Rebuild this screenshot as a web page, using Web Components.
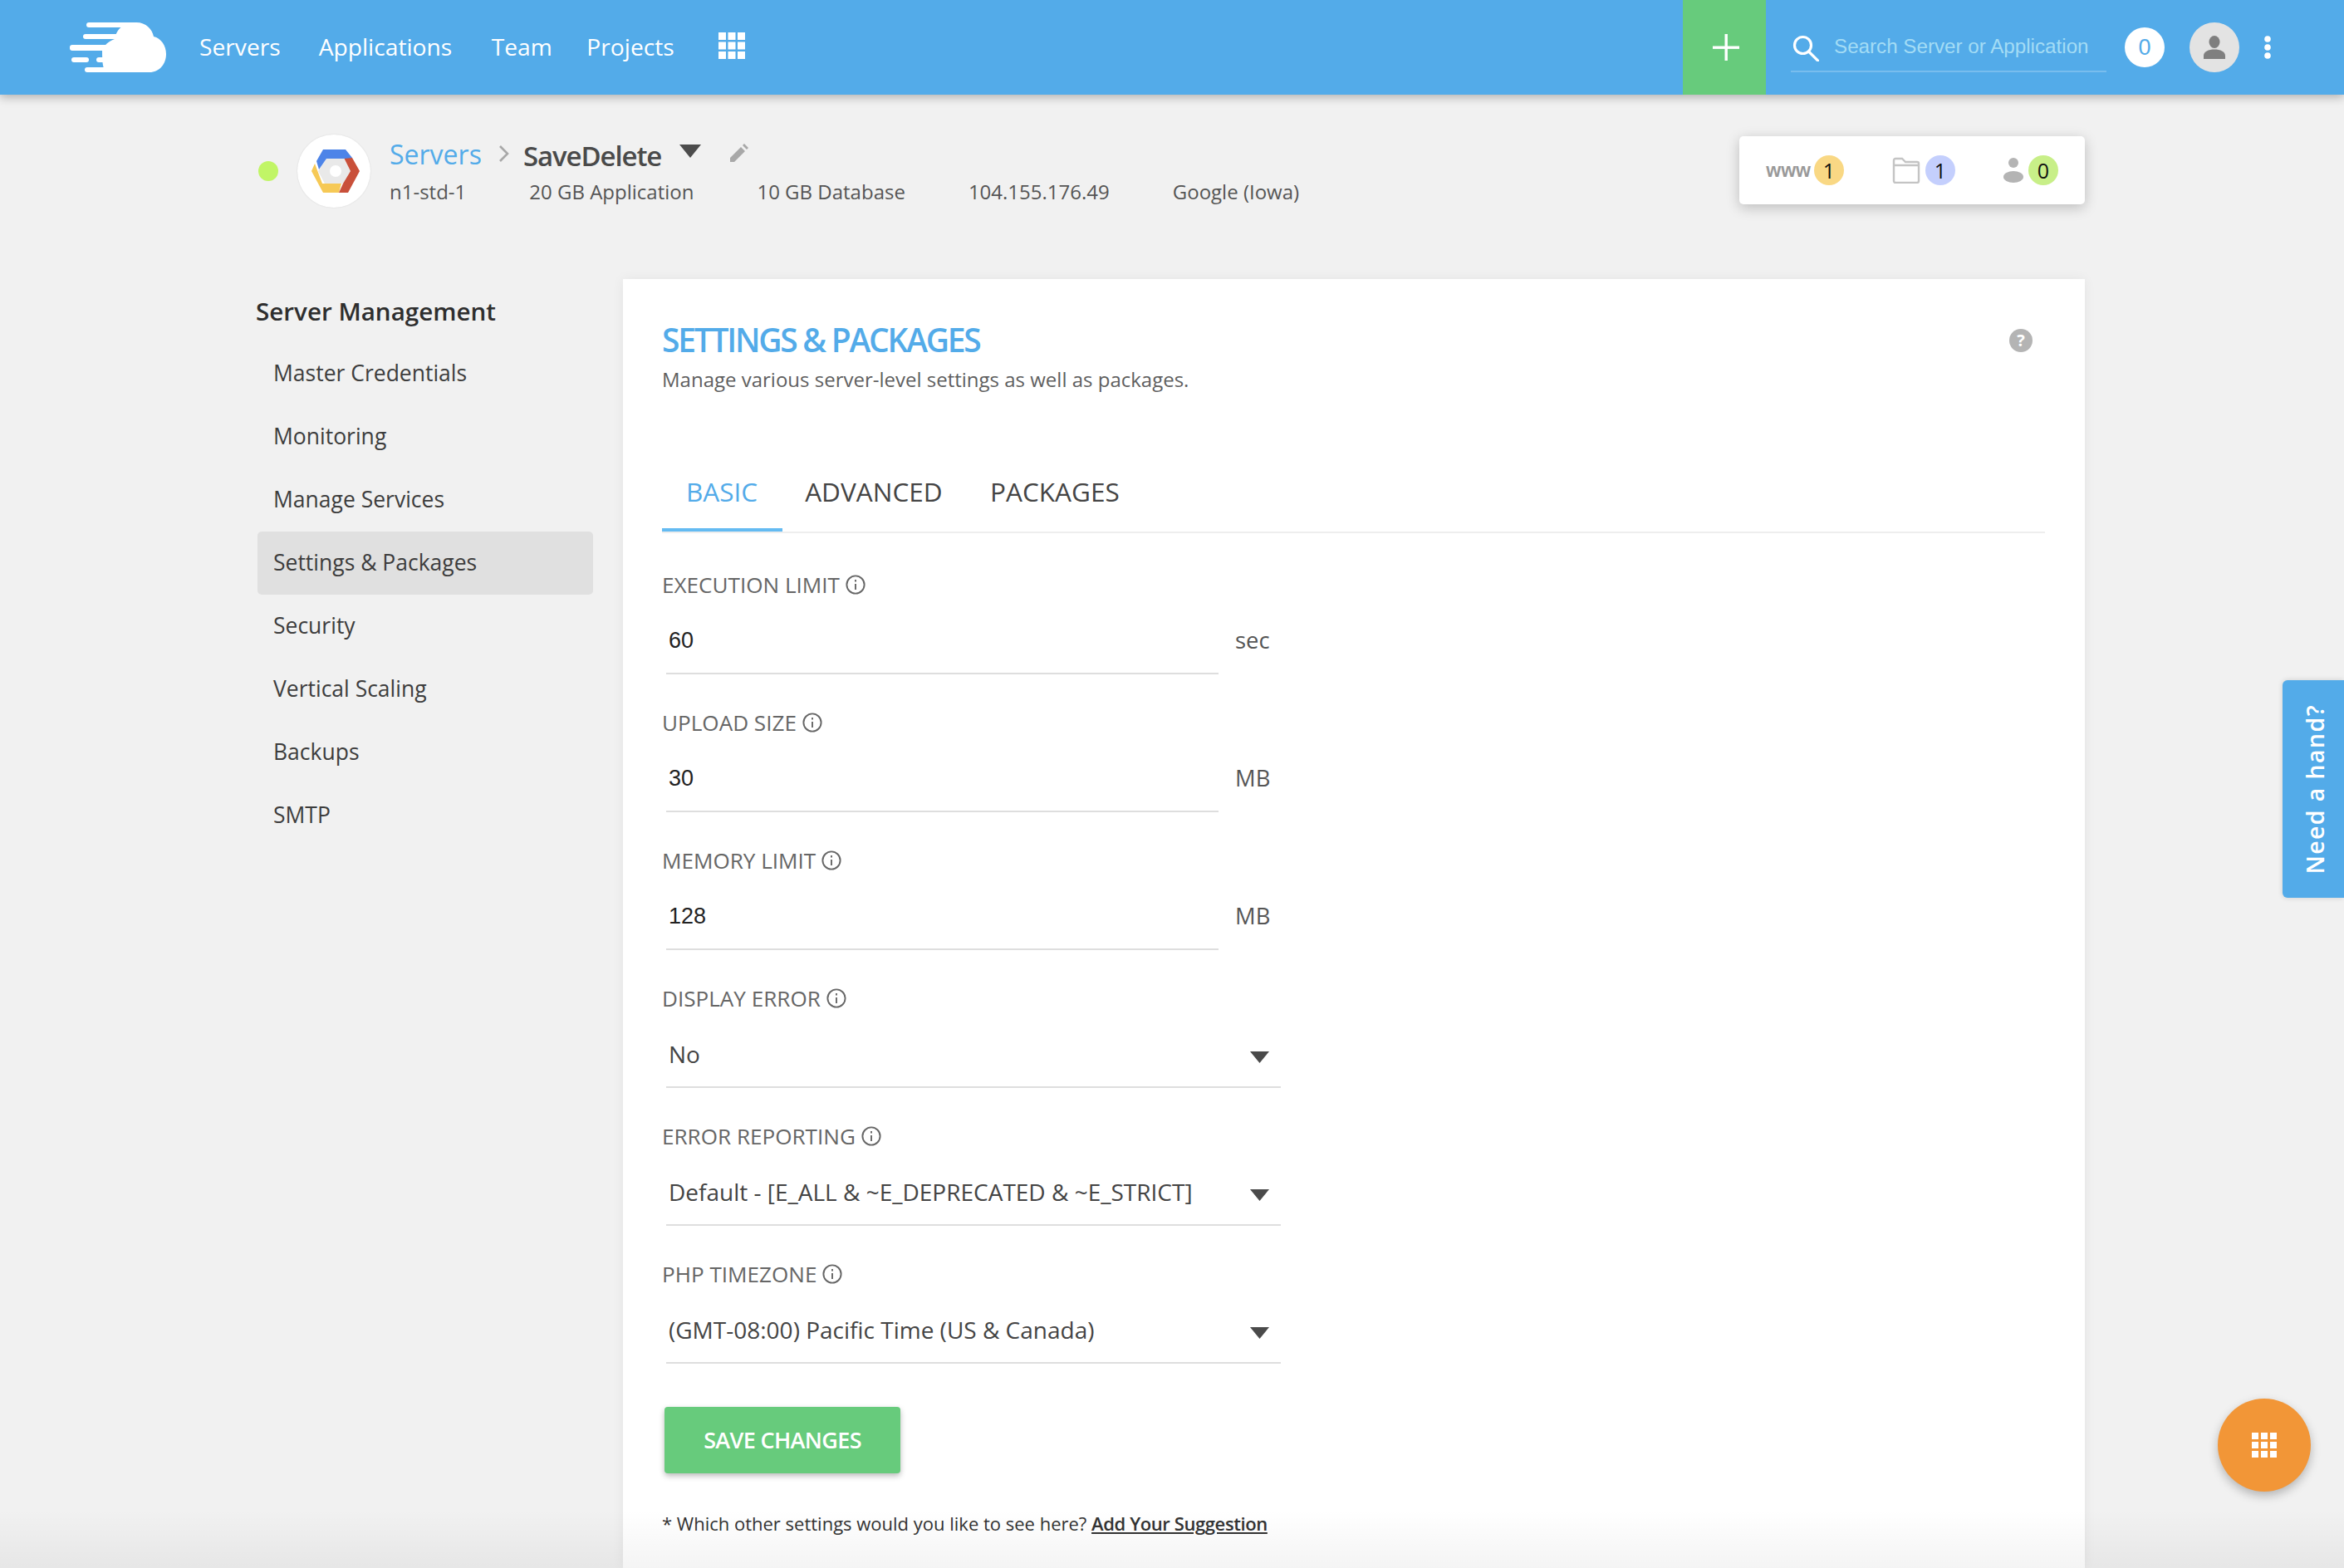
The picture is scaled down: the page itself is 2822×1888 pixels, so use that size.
<!DOCTYPE html>
<html lang="en">
<head>
<meta charset="utf-8">
<title>Settings &amp; Packages</title>
<style>
  html, body { margin: 0; padding: 0; }
  body {
    width: 2822px; height: 1888px; overflow: hidden; position: relative;
    background: #f1f1f1; color: #444;
    font-family: "Open Sans", "Liberation Sans", sans-serif;
  }
  .page { display: flex; margin-left: 310px; width: 2200px; }
</style>
</head>
<body>
<app-header></app-header>
<server-bar></server-bar>
<div class="page">
  <side-nav title="Server Management">
    <nav-item>Master Credentials</nav-item>
    <nav-item>Monitoring</nav-item>
    <nav-item>Manage Services</nav-item>
    <nav-item active>Settings &amp; Packages</nav-item>
    <nav-item>Security</nav-item>
    <nav-item>Vertical Scaling</nav-item>
    <nav-item>Backups</nav-item>
    <nav-item>SMTP</nav-item>
  </side-nav>
  <settings-card>
    <form-field label="EXECUTION LIMIT" value="60" unit="sec"></form-field>
    <form-field label="UPLOAD SIZE" value="30" unit="MB"></form-field>
    <form-field label="MEMORY LIMIT" value="128" unit="MB"></form-field>
    <form-field label="DISPLAY ERROR" value="No" select></form-field>
    <form-field label="ERROR REPORTING" value="Default - [E_ALL &amp; ~E_DEPRECATED &amp; ~E_STRICT]" select></form-field>
    <form-field label="PHP TIMEZONE" value="(GMT-08:00) Pacific Time (US &amp; Canada)" select></form-field>
  </settings-card>
</div>
<help-tab></help-tab>
<apps-fab></apps-fab>
<page-fade></page-fade>

<script>
  // 3x3 square grid, used in the header and on the round button
  function gridIcon(cell, gap, color) {
    let rects = '';
    const step = cell + gap;
    for (let r = 0; r < 3; r++) {
      for (let c = 0; c < 3; c++) {
        rects += `<rect x="${c * step}" y="${r * step}" width="${cell}" height="${cell}"/>`;
      }
    }
    const size = cell * 3 + gap * 2;
    return `<svg width="${size}" height="${size}" viewBox="0 0 ${size} ${size}" fill="${color}">${rects}</svg>`;
  }

  class AppHeader extends HTMLElement {
    constructor() {
      super();
      this.attachShadow({ mode: 'open' });
      this.shadowRoot.innerHTML = `
        <style>
          :host {
            display: flex; align-items: center; height: 114px; position: relative; z-index: 2;
            box-sizing: border-box; padding-right: 88px;
            background: #53abe9; color: #fff;
            box-shadow: 0 3px 11px rgba(0, 0, 0, .28);
          }
          .logo { margin-left: 84px; display: block; flex: none; }
          nav { display: flex; margin: -2px 0 0 40px; font-size: 28.2px; line-height: 40px; }
          nav a { margin-right: 47.5px; }
          nav a:nth-child(1) { margin-right: 46px; }
          nav a:nth-child(3) { margin-right: 41.5px; }
          .grid { margin-left: 6px; display: block; }
          .add {
            margin-left: auto; width: 100px; height: 114px; background: #67cb7c; flex: none;
            box-sizing: border-box; padding-left: 3px;
            display: flex; align-items: center; justify-content: center;
          }
          .search {
            margin-left: 30px; width: 380px; height: 87px; box-sizing: border-box; display: flex; flex: none;
            align-items: center; border-bottom: 2px solid rgba(255, 255, 255, .22); padding: 30px 0 0 2px;
            align-self: flex-start;
          }
          .search svg { flex: none; }
          .search span {
            margin: -3px 0 0 18px; font: 24.2px/40px "Liberation Sans", Arial, sans-serif; color: #a3dcf5;
            white-space: nowrap;
          }
          .count {
            margin-left: 22px; width: 48px; height: 48px; border-radius: 50%; background: #fff; color: #53abe9;
            display: flex; align-items: center; justify-content: center; flex: none;
            font: 27px/48px "Liberation Sans", Arial, sans-serif;
          }
          .avatar {
            margin-left: 30px; width: 60px; height: 60px; border-radius: 50%; background: #e3e3e3; flex: none;
            display: flex; align-items: center; justify-content: center;
          }
          .more { margin-left: 30px; display: block; flex: none; }
        </style>
        <svg class="logo" width="116" height="60" viewBox="0 0 116 60" fill="#fff">
          <path d="M40 0H80C92 0 99 8 101 17C110 19 116 28 116 38C116 50 108 60 96 60H44C40 56 39 50 39 34C40 28 48 22 54 20C55 14 58 8 63 5C55 2 45 2 40 0Z"/>
          <rect x="20" y="0" width="50" height="6" rx="3"/>
          <rect x="16" y="14" width="45" height="6" rx="3"/>
          <rect x="0" y="27" width="48" height="7" rx="3"/>
          <rect x="2" y="42" width="21" height="6" rx="3"/>
          <rect x="32" y="42" width="12" height="6" rx="3"/>
          <rect x="18" y="54" width="30" height="6" rx="3"/>
        </svg>
        <nav><a>Servers</a><a>Applications</a><a>Team</a><a>Projects</a></nav>
        <span class="grid">${gridIcon(9, 2.5, '#fff')}</span>
        <div class="add">
          <svg width="32" height="32" viewBox="0 0 32 32" fill="#fff"><rect x="14.5" width="3.4" height="32"/><rect y="14.5" width="32" height="3.4"/></svg>
        </div>
        <div class="search">
          <svg width="32" height="32" viewBox="0 0 32 32" fill="none" stroke="#fff" stroke-width="3.2"><circle cx="12.5" cy="12.5" r="10"/><path d="M19.5 20l11 11" stroke-linecap="round"/></svg>
          <span>Search Server or Application</span>
        </div>
        <div class="count">0</div>
        <div class="avatar">
          <svg width="26" height="28" viewBox="0 0 26 28" fill="#7f7f7f"><ellipse cx="13" cy="7.5" rx="6.5" ry="7.5"/><path d="M0 28v-4c0-5 6-7.5 13-7.5s13 2.5 13 7.5v4z"/></svg>
        </div>
        <svg class="more" width="8" height="28" viewBox="0 0 8 28" fill="#fff"><circle cx="4" cy="4" r="3.8"/><circle cx="4" cy="14" r="3.8"/><circle cx="4" cy="24" r="3.8"/></svg>
      `;
    }
  }
  customElements.define('app-header', AppHeader);

  class ServerBar extends HTMLElement {
    constructor() {
      super();
      this.attachShadow({ mode: 'open' });
      this.shadowRoot.innerHTML = `
        <style>
          :host {
            display: flex; align-items: flex-start; height: 222px; box-sizing: border-box;
            margin-left: 311px; width: 2199px; padding-top: 48px; color: #555;
          }
          .dot { width: 24px; height: 24px; border-radius: 50%; background: #c1f566; margin-top: 32px; flex: none; }
          .cloud {
            width: 88px; height: 88px; border-radius: 50%; background: #fff; margin-left: 23px; flex: none;
            box-sizing: border-box; padding-left: 3px;
            display: flex; align-items: center; justify-content: center; box-shadow: 0 0 2px rgba(0, 0, 0, .12);
          }
          .info { margin-left: 23px; }
          .crumb { display: flex; align-items: center; height: 46px; white-space: nowrap; }
          .crumb a { font-size: 32px; color: #53abe9; }
          .crumb .sep { margin: 0 16px 0 20px; }
          .crumb b { font-size: 33px; font-weight: 600; color: #4a4a4a; letter-spacing: -1.1px; position: relative; top: 2px; }
          .crumb .caret { margin-left: 22px; margin-top: -6px; }
          .crumb .pen { margin-left: 34.5px; margin-top: -2px; }
          .meta { display: flex; height: 38px; line-height: 38px; font-size: 24px; margin-top: 4px; white-space: nowrap; }
          .meta span { margin-right: 76px; }
          .stats {
            margin-left: auto; margin-top: 2px; margin-right: 0; height: 82px; box-sizing: border-box;
            display: flex; align-items: center; padding: 0 32px; background: #fff; border-radius: 5px;
            box-shadow: 0 4px 16px rgba(0, 0, 0, .22);
          }
          .www { font: bold 23px/36px "Liberation Sans", Arial, sans-serif; color: #999; margin-right: 4px; }
          .badge {
            width: 36px; height: 36px; border-radius: 50%; color: #111; flex: none;
            font-size: 25px; line-height: 36px; text-align: center;
          }
          .stats svg { display: block; margin-right: 6px; flex: none; }
          .gap { margin-left: 58px; }
        </style>
        <div class="dot"></div>
        <div class="cloud">
          <svg width="58" height="54" viewBox="0 0 58 54">
            <polygon points="18,12 39,12 47,27 38,42 16,42 8,27" fill="#e9e9e9"/>
            <circle cx="29" cy="27" r="7" fill="#fff"/>
            <polygon points="0,27 4,18 13,42 36,42 33,53 14,53" fill="#f6c956"/>
            <polygon points="39,11 49,11 58,27 44,53 33,53 38,42 47,27" fill="#c9503a"/>
            <polygon points="9,25 6,15 14,1 41,1 49,11 39,12 18,12" fill="#4d84e8"/>
          </svg>
        </div>
        <div class="info">
          <div class="crumb">
            <a>Servers</a>
            <svg class="sep" width="14" height="20" viewBox="0 0 14 20" fill="none" stroke="#a8a8a8" stroke-width="2.6"><path d="M2 1l9 9-9 9"/></svg>
            <b>SaveDelete</b>
            <svg class="caret" width="26" height="16" viewBox="0 0 26 16" fill="#4c4c4c"><polygon points="0,0 26,0 13,16"/></svg>
            <svg class="pen" width="22" height="22" viewBox="0 0 22 22" fill="#a8a8a8"><path d="M0 22v-5L13 4l5 5L5 22zM15 2l2-2 5 5-2 2z"/></svg>
          </div>
          <div class="meta">
            <span>n1-std-1</span><span>20 GB Application</span><span>10 GB Database</span><span>104.155.176.49</span><span>Google (Iowa)</span>
          </div>
        </div>
        <div class="stats">
          <span class="www">www</span><span class="badge" style="background:#f9d884">1</span>
          <svg class="gap" width="34" height="32" viewBox="0 0 34 32" fill="none" stroke="#c4c4c4" stroke-width="2.4"><path d="M2 29V4a2 2 0 0 1 2-2h8l4 4h14a2 2 0 0 1 2 2v21a2 2 0 0 1-2 2H4a2 2 0 0 1-2-2zM2 10h30"/></svg><span class="badge" style="background:#c4cffd">1</span>
          <svg class="gap" width="24" height="30" viewBox="0 0 24 30" fill="#b4b4b4"><circle cx="12" cy="6" r="6"/><ellipse cx="12" cy="23" rx="12" ry="7"/></svg><span class="badge" style="background:#c8ef88">0</span>
        </div>
      `;
    }
  }
  customElements.define('server-bar', ServerBar);

  class SideNav extends HTMLElement {
    constructor() {
      super();
      this.attachShadow({ mode: 'open' });
      this.shadowRoot.innerHTML = `
        <style>
          :host { display: block; width: 404px; flex: none; }
          h2 {
            margin: 14px 0 12px -2px; font-size: 29.6px; line-height: 50px; font-weight: 600; color: #2e2e2e;
            white-space: nowrap;
          }
        </style>
        <h2>${this.getAttribute('title')}</h2>
        <slot></slot>
      `;
    }
  }
  customElements.define('side-nav', SideNav);

  class NavItem extends HTMLElement {
    constructor() {
      super();
      this.attachShadow({ mode: 'open' });
      this.shadowRoot.innerHTML = `
        <style>
          :host {
            display: block; height: 76px; line-height: 74px; padding-left: 19px; font-size: 26.5px;
            color: #3d3d3d; border-radius: 5px; white-space: nowrap;
          }
          :host([active]) { background: #e0e0e0; }
        </style>
        <slot></slot>
      `;
    }
  }
  customElements.define('nav-item', NavItem);

  class SettingsCard extends HTMLElement {
    constructor() {
      super();
      this.attachShadow({ mode: 'open' });
      this.shadowRoot.innerHTML = `
        <style>
          :host {
            display: block; margin-left: 36px; width: 1760px; height: 1552px; box-sizing: border-box;
            padding: 50px 48px 0 47px; background: #fff; position: relative; overflow: hidden;
            box-shadow: 0 0 14px rgba(0, 0, 0, .06);
          }
          h1 {
            margin: 0; font-size: 39px; line-height: 46px; font-weight: 600; color: #53abe9; letter-spacing: -2.25px;
          }
          .sub { margin-top: 7px; font-size: 24px; line-height: 36px; color: #5f5f5f; }
          .help { position: absolute; top: 60px; left: 1669px; }
          .tabs {
            display: flex; margin-top: 71px; border-bottom: 2px solid #eeeeee; font-size: 31.5px; line-height: 44px;
            color: #444; margin-bottom: 45px;
          }
          .tabs a { padding: 24px 28px 22px; border-bottom: 4px solid transparent; }
          .tabs a.on { color: #53abe9; border-bottom-color: #64bbf2; padding-left: 29px; padding-right: 30px; }
          .tabs a:nth-child(2) { padding-left: 27px; padding-right: 29.5px; }
          .save {
            display: inline-block; margin: 11px 0 0 3px; width: 284px; height: 80px; line-height: 80px;
            text-align: center; background: #67cb7c; color: #fff; font-size: 27px; font-weight: 600;
            letter-spacing: -.65px; border-radius: 4px; box-shadow: 0 3px 7px rgba(0, 0, 0, .28);
          }
          .note { margin-top: 42px; font-size: 22px; line-height: 36px; color: #333; white-space: nowrap; }
          .note a { font-weight: 600; text-decoration: underline; letter-spacing: -.4px; }
        </style>
        <h1>SETTINGS &amp; PACKAGES</h1>
        <div class="sub">Manage various server-level settings as well as packages.</div>
        <svg class="help" width="28" height="28" viewBox="0 0 28 28">
          <circle cx="14" cy="14" r="14" fill="#b4b4b4"/>
          <text x="14" y="21" text-anchor="middle" font-family="Open Sans, sans-serif" font-weight="700" font-size="20" fill="#fff">?</text>
        </svg>
        <div class="tabs"><a class="on">BASIC</a><a>ADVANCED</a><a>PACKAGES</a></div>
        <slot></slot>
        <div class="save">SAVE CHANGES</div>
        <div class="note">* Which other settings would you like to see here? <a>Add Your Suggestion</a></div>
      `;
    }
  }
  customElements.define('settings-card', SettingsCard);

  class FormField extends HTMLElement {
    constructor() {
      super();
      this.attachShadow({ mode: 'open' });
      const isSelect = this.hasAttribute('select');
      const value = this.getAttribute('value').replace(/&/g, '&amp;');
      this.shadowRoot.innerHTML = `
        <style>
          :host { display: block; height: 166px; box-sizing: border-box; }
          .label {
            display: flex; align-items: center; height: 36px; font-size: 26.1px; color: #666;
            white-space: nowrap; position: relative; top: -1px;
          }
          .label svg { margin-left: 7px; flex: none; }
          .row { display: flex; margin-left: 5px; }
          .box {
            height: 89px; box-sizing: border-box; border-bottom: 2px solid #dedede; padding: 25px 0 0 3px;
            white-space: nowrap; color: #222; font: 27px/46px "Liberation Sans", Arial, sans-serif;
            width: 665px;
          }
          .box.select {
            width: 740px; padding-top: 25px; display: flex; justify-content: space-between;
            color: #444; font: 28px/46px "Open Sans", sans-serif;
          }
          .box.select svg { margin: 20px 14px 0 0; flex: none; }
          .unit { margin: 25px 0 0 20px; font-size: 27.4px; line-height: 46px; color: #555; }
        </style>
        <div class="label">${this.getAttribute('label')}
          <svg width="24" height="24" viewBox="0 0 24 24" fill="none" stroke="#666" stroke-width="1.9"><circle cx="12" cy="12" r="10.6"/><path d="M12 11v7M12 6v2.6"/></svg>
        </div>
        <div class="row">
          ${isSelect
            ? `<div class="box select"><span>${value}</span><svg width="23" height="14" viewBox="0 0 23 14" fill="#4a4a4a"><polygon points="0,0 23,0 11.5,14"/></svg></div>`
            : `<div class="box">${value}</div><div class="unit">${this.getAttribute('unit')}</div>`}
        </div>
      `;
    }
  }
  customElements.define('form-field', FormField);

  class HelpTab extends HTMLElement {
    constructor() {
      super();
      this.attachShadow({ mode: 'open' });
      this.shadowRoot.innerHTML = `
        <style>
          :host {
            position: absolute; left: 2748px; top: 819px; width: 74px; height: 262px; z-index: 3;
            background: #53abe9; color: #fff; border-radius: 6px 0 0 6px;
            box-shadow: 0 0 6px rgba(0, 0, 0, .15);
            display: flex; align-items: center; justify-content: center;
          }
          span {
            writing-mode: vertical-rl; transform: rotate(180deg) translateX(-2px); white-space: nowrap;
            font: 600 28.5px/36px "Open Sans", sans-serif; letter-spacing: 1.4px;
          }
        </style>
        <span>Need a hand?</span>
      `;
    }
  }
  customElements.define('help-tab', HelpTab);

  class AppsFab extends HTMLElement {
    constructor() {
      super();
      this.attachShadow({ mode: 'open' });
      this.shadowRoot.innerHTML = `
        <style>
          :host {
            position: absolute; left: 2670px; top: 1684px; width: 112px; height: 112px; border-radius: 50%; z-index: 3;
            background: #f29637; box-shadow: 0 5px 12px rgba(0, 0, 0, .25);
            display: flex; align-items: center; justify-content: center;
          }
          svg { display: block; }
        </style>
        ${gridIcon(8, 3, '#fff')}
      `;
    }
  }
  customElements.define('apps-fab', AppsFab);

  // darker band along the bottom edge of the window
  class PageFade extends HTMLElement {
    constructor() {
      super();
      this.attachShadow({ mode: 'open' });
      this.shadowRoot.innerHTML = `
        <style>
          :host {
            position: absolute; left: 0; right: 0; bottom: 0; height: 70px; z-index: 4; pointer-events: none;
            background: linear-gradient(rgba(0, 0, 0, 0), rgba(0, 0, 0, .045));
          }
        </style>
      `;
    }
  }
  customElements.define('page-fade', PageFade);
</script>
</body>
</html>
